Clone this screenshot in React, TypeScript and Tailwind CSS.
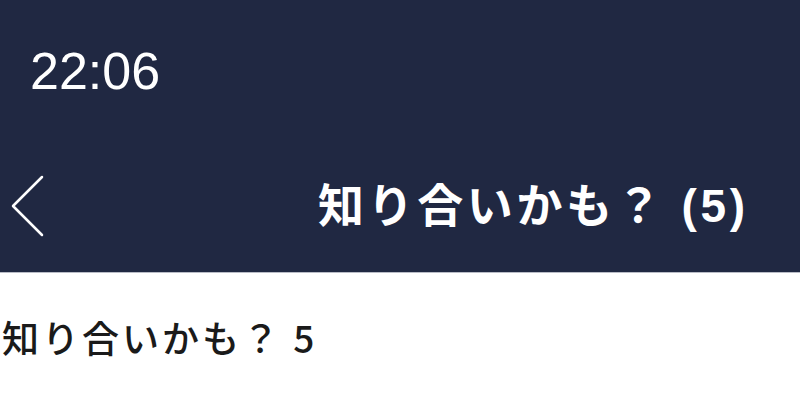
import { FC } from "react";

const BackIcon: FC = () => (
  <svg width="36" height="64" viewBox="0 0 36 64" fill="none">
    <polyline
      points="32,3 3,32 32,61"
      stroke="white"
      strokeWidth="2.5"
      strokeLinecap="round"
      strokeLinejoin="round"
    />
  </svg>
);

const App: FC = () => {
  return (
    <div className="w-[800px] h-[418px] bg-white font-['Liberation_Sans','Noto_Sans_CJK_JP',sans-serif] overflow-hidden">
      {/* header */}
      <div className="h-[273px] bg-[#202842] border-b border-[#b9bcc6] flex flex-col">
        <div className="pt-[45px] pl-[30px] text-white text-[52px] leading-none h-[140px]">
          22:06
        </div>
        <div className="flex items-center h-[132px]">
          <div className="pl-[10px]">
            <BackIcon />
          </div>
          <h1 className="ml-[272px] text-white text-[46px] font-bold leading-none tracking-[3.6px]">
            知り合いかも？ (5)
          </h1>
        </div>
      </div>

      {/* body */}
      <div className="pt-[46px] pl-[2px]">
        <p className="font-['Noto_Sans_CJK_JP',sans-serif] text-[37px] font-medium leading-none text-[#1a1a1a] tracking-[3px]">
          知り合いかも？ 5
        </p>
      </div>
    </div>
  );
};

export default App;
